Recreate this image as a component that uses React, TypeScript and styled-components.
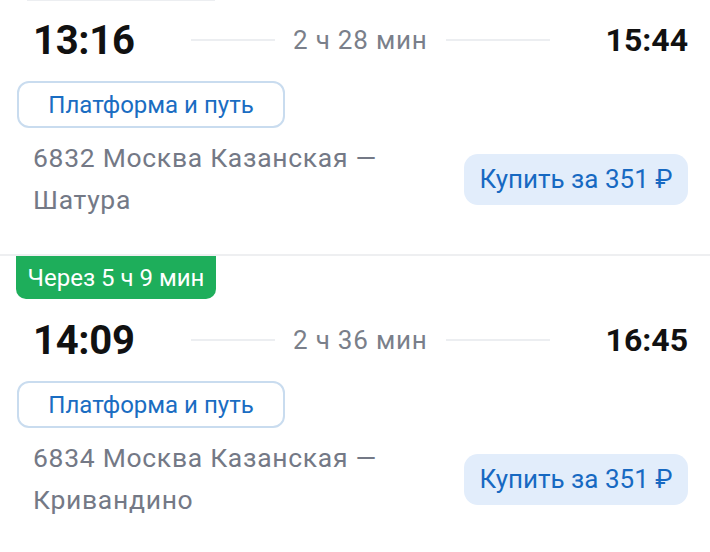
import React from "react";
import styled, { createGlobalStyle } from "styled-components";

const GlobalStyle = createGlobalStyle`
  html, body {
    margin: 0;
    padding: 0;
    background: #fff;
  }
  body {
    font-family: Roboto, "Noto Sans", sans-serif;
    width: 710px;
    overflow: hidden;
  }
`;

const Page = styled.div`
  width: 710px;
  background: #fff;
`;

const TopEdge = styled.div`
  height: 1px;
  width: 188px;
  margin-left: 27px;
  background: #eceef1;
`;

const Card = styled.div`
  padding: 15px 22px 33px 17px;
`;

const TimeRow = styled.div`
  display: flex;
  align-items: center;
  height: 48px;
  padding-left: 16px;
`;

const DepTime = styled.div`
  font-size: 40px;
  font-weight: 700;
  color: #111;
  width: 158px;
  letter-spacing: -0.3px;
`;

const ArrTime = styled.div`
  font-size: 32px;
  font-weight: 700;
  color: #111;
  margin-left: auto;
`;

const Line = styled.div<{ $w: number }>`
  width: ${(p) => p.$w}px;
  height: 2px;
  background: #eceef1;
`;

const Duration = styled.div`
  font-size: 26px;
  color: #7a7f8a;
  margin: 0 18px;
  letter-spacing: 0.8px;
`;

const PlatformButton = styled.button`
  margin-top: 17px;
  display: block;
  width: 268px;
  height: 47px;
  border: 2px solid #c9dcef;
  border-radius: 12px;
  background: #fff;
  color: #1a6dc2;
  font-family: Roboto, "Noto Sans", sans-serif;
  font-size: 24px;
  padding: 0;
`;

const RouteRow = styled.div`
  margin-top: 9px;
  display: flex;
  align-items: center;
  justify-content: space-between;
`;

const Route = styled.div`
  padding-left: 16px;
  width: 380px;
  font-size: 26.5px;
  line-height: 42px;
  color: #747986;
  letter-spacing: 0.7px;
`;

const BuyButton = styled.button`
  width: 224px;
  height: 51px;
  border: none;
  border-radius: 14px;
  background: #e2edfb;
  color: #1769c2;
  font-family: Roboto, "Noto Sans", sans-serif;
  font-size: 26px;
  padding: 0;
`;

const Divider = styled.div`
  height: 2px;
  background: #eeeff1;
`;

const Badge = styled.div`
  margin: 0 0 2px 16px;
  width: 200px;
  height: 43px;
  background: #1eae5b;
  border-radius: 0 0 10px 10px;
  color: #fff;
  font-size: 24px;
  display: flex;
  align-items: center;
  justify-content: center;
`;

type Trip = {
  dep: string;
  arr: string;
  dur: string;
  route: string;
  price: string;
};

const TripCard: React.FC<{ trip: Trip }> = ({ trip }) => (
  <Card>
    <TimeRow>
      <DepTime>{trip.dep}</DepTime>
      <Line $w={84} />
      <Duration>{trip.dur}</Duration>
      <Line $w={104} />
      <ArrTime>{trip.arr}</ArrTime>
    </TimeRow>
    <PlatformButton>Платформа и путь</PlatformButton>
    <RouteRow>
      <Route>{trip.route}</Route>
      <BuyButton>Купить за {trip.price} ₽</BuyButton>
    </RouteRow>
  </Card>
);

const trips: Trip[] = [
  {
    dep: "13:16",
    arr: "15:44",
    dur: "2 ч 28 мин",
    route: "6832 Москва Казанская — Шатура",
    price: "351",
  },
  {
    dep: "14:09",
    arr: "16:45",
    dur: "2 ч 36 мин",
    route: "6834 Москва Казанская — Кривандино",
    price: "351",
  },
];

export default function App() {
  return (
    <Page>
      <GlobalStyle />
      <TopEdge />
      <TripCard trip={trips[0]} />
      <Divider />
      <Badge>Через 5 ч 9 мин</Badge>
      <TripCard trip={trips[1]} />
    </Page>
  );
}
